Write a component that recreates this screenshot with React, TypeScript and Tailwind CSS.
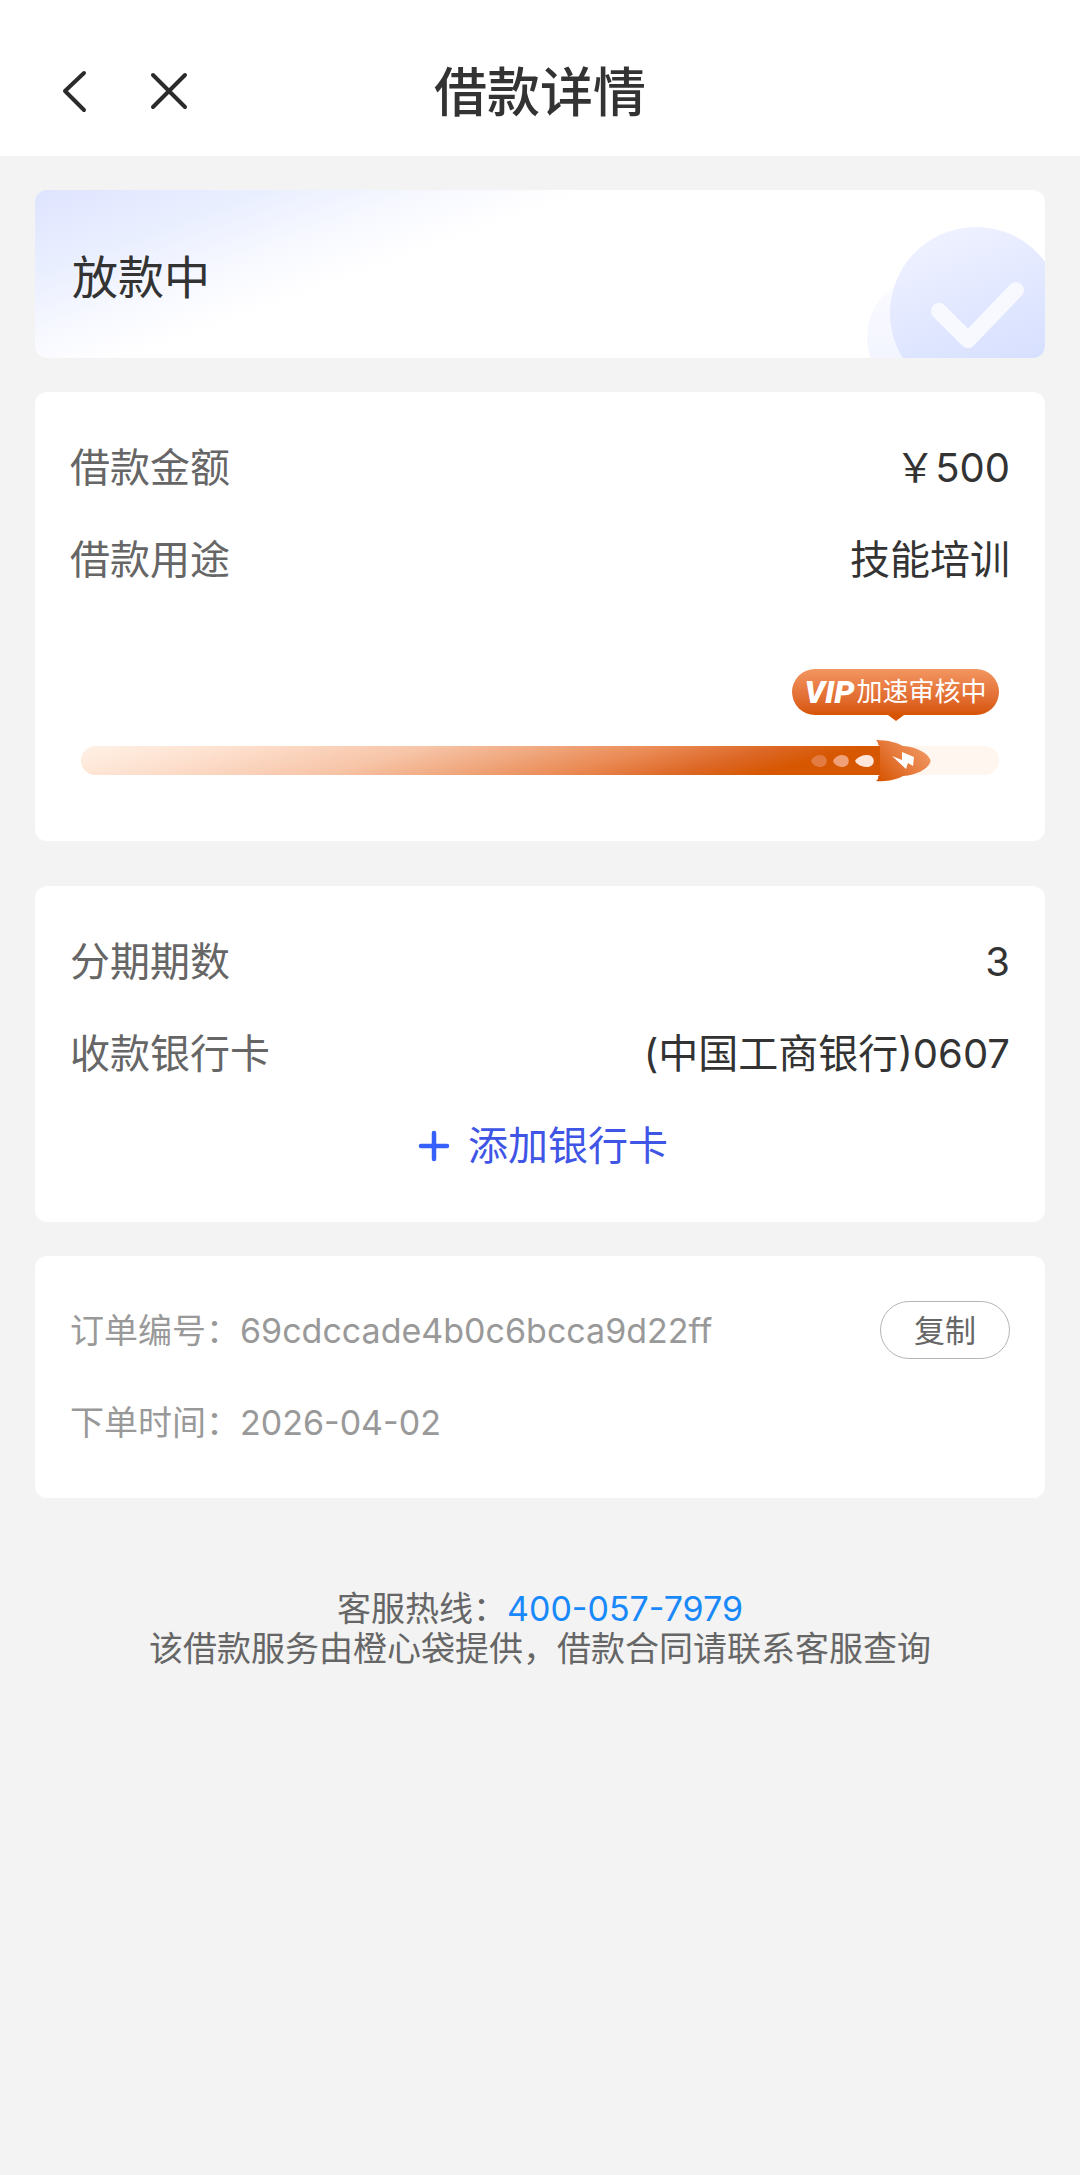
import type { ReactNode } from 'react';

const ORDER_ID = '69cdccade4b0c6bcca9d22ff';
const HOTLINE = '400-057-7979';
const PROGRESS = 92.6;

function Card({ children, className }: { children: ReactNode; className: string }) {
  return <section className={`bg-white rounded-xl px-[35px] pb-[30px] ${className}`}>{children}</section>;
}

function Row({ label, value }: { label: string; value: string }) {
  return (
    <div className="flex items-center justify-between h-[92px] text-[40px]">
      <dt className="text-[#666]">{label}</dt>
      <dd className="text-[#333]">{value}</dd>
    </div>
  );
}

function StatusBadge() {
  return (
    <svg viewBox="0 0 180 131" className="absolute right-0 bottom-0 w-[180px] h-[131px]" aria-hidden="true">
      <defs>
        <linearGradient id="disc" x1="0.25" y1="0" x2="0.6" y2="0.9">
          <stop offset="0" stopColor="#f0f2ff" />
          <stop offset="0.5" stopColor="#e2e8ff" />
          <stop offset="1" stopColor="#d6dfff" />
        </linearGradient>
        <linearGradient id="discBack" x1="0" y1="0" x2="0" y2="1">
          <stop offset="0" stopColor="#fbfbff" />
          <stop offset="1" stopColor="#f0f3ff" />
        </linearGradient>
      </defs>
      <circle cx="62" cy="110" r="60" fill="url(#discBack)" />
      <circle cx="111" cy="86" r="86" fill="url(#disc)" />
      <path d="M74 84 L103 113 L151 63" fill="none" stroke="#f8f9ff" strokeWidth="16" strokeLinecap="round" strokeLinejoin="round" />
    </svg>
  );
}

function Rocket() {
  return (
    <svg viewBox="0 0 120 42" className="absolute right-0 -top-1.5 w-[120px] h-[42px]" aria-hidden="true">
      <defs>
        <linearGradient id="rocket" x1="1" y1="0.2" x2="0" y2="0.9">
          <stop offset="0" stopColor="#f09a66" />
          <stop offset="0.5" stopColor="#e67a3c" />
          <stop offset="1" stopColor="#d65400" />
        </linearGradient>
      </defs>
      {/* 尾焰 */}
      <path d="M0 21 C2 16 7 15 9 15 C18 15 18 27 9 27 C7 27 2 26 0 21 Z" fill="#e27b42" />
      <path d="M22 21 C24 16 29 15 31 15 C40 15 40 27 31 27 C29 27 24 26 22 21 Z" fill="#f0a078" />
      <path d="M44 21 C47 16 53 15 56 15 C65 15 65 27 56 27 C53 27 47 26 44 21 Z" fill="#ffe6da" />
      {/* 机身 */}
      <path d="M65 0 C77 0 87 3 92 6 C106 7 116 13 119 19 Q120 21 119 23 C116 29 106 35 92 36 C87 39 77 42 65 41 Q68 39 67 36 L69 35 V6 L67 5 Q68 3 65 0 Z" fill="url(#rocket)" />
      <path d="M81 16 L91 20 L91 12 L103 17 L102 26 L97 23 L95 29 Z" fill="#fff" />
    </svg>
  );
}

function ReviewProgress() {
  return (
    <div className="mt-[63px] mb-9 mx-[11px] flex flex-col">
      <div className="relative self-end flex items-center h-[46px] w-[207px] justify-center gap-0.5 rounded-full bg-linear-to-b from-[#f39660] to-[#d65300] text-white">
        <span className="font-[Roboto] italic font-black text-[32px] leading-none">VIP</span>
        <span className="text-[26px] leading-none">加速审核中</span>
        <svg viewBox="0 0 16 6" className="absolute left-1/2 -translate-x-1/2 top-full w-4 h-1.5" aria-hidden="true">
          <path d="M0 0 H16 L8 6 Z" fill="#d65300" />
        </svg>
      </div>
      <div className="mt-[31px] h-[29px] rounded-full bg-[#fff7ef]" role="progressbar" aria-valuenow={PROGRESS} aria-label="审核进度">
        <div className="relative h-full pr-11" style={{ width: `${PROGRESS}%` }}>
          <div className="h-full rounded-l-full bg-[linear-gradient(165deg,#fff2e6_0%,#fddfcd_18%,#f7c5a8_38%,#f0a980_51%,#ea8a54_64%,#dc6624_77%,#d65700_86%)]" />
          <Rocket />
        </div>
      </div>
    </div>
  );
}

export default function App() {
  return (
    <div lang="zh-CN" className="min-h-screen bg-[#f3f3f3] font-[Inter,'Noto_Sans_CJK_SC',sans-serif]">
      <header className="bg-white pt-7">
        <div className="grid grid-cols-3 items-center h-32">
          <div className="flex gap-[51px] pl-[52px]">
            <button type="button" aria-label="返回">
              <svg viewBox="0 0 44 44" className="w-11 h-11" fill="none" stroke="#2b2b2b" strokeWidth="4" strokeLinecap="round" strokeLinejoin="round">
                <path d="M32 3 L13 21 L32 40" />
              </svg>
            </button>
            <button type="button" aria-label="关闭">
              <svg viewBox="0 0 44 44" className="w-11 h-11" fill="none" stroke="#2b2b2b" strokeWidth="4" strokeLinecap="round">
                <path d="M6 5 L38 37 M38 5 L6 37" />
              </svg>
            </button>
          </div>
          <h1 className="pt-1 text-center text-[53px] font-medium text-[#333] whitespace-nowrap">借款详情</h1>
        </div>
      </header>

      <main className="px-[35px] pt-[34px]">
        <section className="relative overflow-hidden flex items-center h-[168px] rounded-xl px-[37px] pt-1.5 bg-[linear-gradient(160deg,#dfe4ff_0%,#eaefff_16%,#f8f9ff_28%,#fff_38%)]">
          <h2 className="text-[46px] text-[#333]">放款中</h2>
          <StatusBadge />
        </section>

        <Card className="mt-[34px] pt-[30px]">
          <dl>
            <Row label="借款金额" value="￥500" />
            <Row label="借款用途" value="技能培训" />
          </dl>
          <ReviewProgress />
        </Card>

        <Card className="mt-[45px] pt-[30px]">
          <dl>
            <Row label="分期期数" value="3" />
            <Row label="收款银行卡" value="(中国工商银行)0607" />
          </dl>
          <button type="button" className="flex items-center justify-center gap-[18px] w-full h-[92px] text-[40px] text-[#3f55e6]">
            <svg viewBox="0 0 38 38" className="w-[38px] h-[38px]" fill="none" stroke="#3560fa" strokeWidth="4.5" strokeLinecap="round">
              <path d="M9 19 H35 M22 6 V32" />
            </svg>
            添加银行卡
          </button>
        </Card>

        <Card className="mt-[34px] pt-7">
          <dl className="text-[34px] text-[#999]">
            <div className="flex items-center h-[92px]">
              <dt>订单编号：</dt>
              <dd>{ORDER_ID}</dd>
              <dd className="ml-auto">
                <button type="button" className="block w-[130px] h-[58px] rounded-full border border-[#b5b5b5] text-[31px] leading-none text-[#666]">
                  复制
                </button>
              </dd>
            </div>
            <div className="flex items-center h-[92px]">
              <dt>下单时间：</dt>
              <dd>2026-04-02</dd>
            </div>
          </dl>
        </Card>

        <footer className="mt-[91px] text-center text-[34px] leading-10 text-[#666]">
          <p>
            客服热线：<a href={`tel:${HOTLINE}`} className="text-[#1989fa]">{HOTLINE}</a>
          </p>
          <p>该借款服务由橙心袋提供，借款合同请联系客服查询</p>
        </footer>
      </main>
    </div>
  );
}
